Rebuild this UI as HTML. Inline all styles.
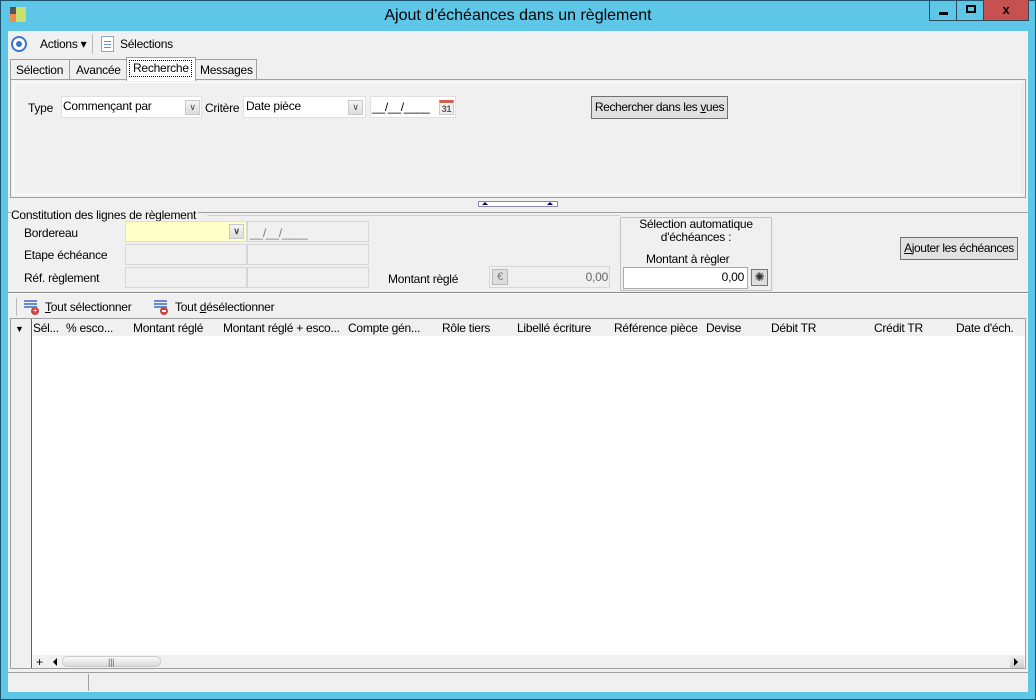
<!DOCTYPE html>
<html><head><meta charset="utf-8">
<style>
*{margin:0;padding:0;box-sizing:border-box}
body{width:1036px;height:700px;overflow:hidden;background:#5ec6e6;font-family:"Liberation Sans",sans-serif;font-size:12px;letter-spacing:-0.25px;color:#000;position:relative}
.a{position:absolute}
.t{position:absolute;white-space:nowrap;line-height:14px}
.fld{position:absolute;border:1px solid #d6d6d6;background:#f0f0f0}
.wh{background:#fff;border:1px solid #e0e0e0}
.btn{position:absolute;border:1px solid #707070;background:#e1e1e1;text-align:center;line-height:20px;font-size:12px;white-space:nowrap;letter-spacing:-0.4px}
.dd{position:absolute;width:15px;height:15px;background:linear-gradient(#f4f4f4,#dcdcdc);border:1px solid #c8c8c8;font-size:9px;text-align:center;line-height:13px;color:#444}
</style></head><body>
<div class="a" style="left:0;top:0;width:1036px;height:700px;border:1px solid #1c5570"></div>
<div class="a" style="left:10px;top:7px;width:6px;height:7px;background:#555"></div>
<div class="a" style="left:10px;top:14px;width:6px;height:8px;background:#f08a50"></div>
<div class="a" style="left:16px;top:7px;width:10px;height:15px;background:#c8e070"></div>
<div class="t" style="left:0;width:1036px;text-align:center;top:7px;font-size:16px;line-height:18px;letter-spacing:0">Ajout d'échéances dans un règlement</div>
<div class="a" style="left:929px;top:0;width:28px;height:21px;border:1px solid #2a4a5a;border-top:none"><div class="a" style="left:9px;top:12px;width:9px;height:3px;background:#000"></div></div>
<div class="a" style="left:956px;top:0;width:28px;height:21px;border:1px solid #2a4a5a;border-top:none"><div class="a" style="left:9px;top:5px;width:10px;height:8px;border:2px solid #000"></div></div>
<div class="a" style="left:983px;top:0;width:46px;height:21px;background:#c75050;border:1px solid #2a4a5a;border-top:none;text-align:center;font-weight:bold;font-size:13px;line-height:19px">x</div>
<div class="a" style="left:8px;top:31px;width:1020px;height:661px;background:#f0f0f0"></div>
<div class="a" style="left:11px;top:36px;width:16px;height:16px;border-radius:50%;border:2px solid #3a78c8;background:#fff"><div class="a" style="left:3px;top:3px;width:6px;height:6px;border-radius:50%;background:#3a78c8"></div></div>
<div class="t" style="left:40px;top:37px">Actions ▾</div>
<div class="a" style="left:92px;top:34px;width:1px;height:20px;background:#bbb"></div>
<div class="a" style="left:101px;top:36px;width:13px;height:16px;background:#fff;border:1px solid #8aa8c8"><div class="a" style="left:2px;top:4px;width:7px;height:1px;background:#6a90c0;box-shadow:0 3px 0 #6a90c0,0 6px 0 #6a90c0"></div></div>
<div class="t" style="left:120px;top:37px">Sélections</div>
<div class="a" style="left:10px;top:79px;width:1016px;height:119px;border:1px solid #a0a0a0"></div>
<div class="a" style="left:13px;top:82px;width:1010px;height:113px;background:#f0f0f0;border:1px solid #fff;border-right-color:#e4e4e4"></div>
<div class="a" style="left:10px;top:59px;width:60px;height:21px;border:1px solid #a0a0a0;background:#f0f0f0"></div><div class="t" style="left:16px;top:63px">Sélection</div>
<div class="a" style="left:69px;top:59px;width:58px;height:21px;border:1px solid #a0a0a0;background:#f0f0f0"></div><div class="t" style="left:76px;top:63px">Avancée</div>
<div class="a" style="left:126px;top:57px;width:70px;height:24px;border:1px solid #a0a0a0;border-bottom:none;background:#fff"></div>
<div class="a" style="left:129px;top:60px;width:63px;height:17px;border:1px dotted #000"></div><div class="t" style="left:133px;top:61px">Recherche</div>
<div class="a" style="left:195px;top:59px;width:62px;height:21px;border:1px solid #a0a0a0;background:#f0f0f0"></div><div class="t" style="left:200px;top:63px">Messages</div>
<div class="t" style="left:28px;top:101px">Type</div>
<div class="a wh" style="left:61px;top:96px;width:141px;height:22px"></div>
<div class="t" style="left:63px;top:99px">Commençant par</div>
<div class="dd" style="left:185px;top:100px">&#x2228;</div>
<div class="t" style="left:205px;top:101px">Critère</div>
<div class="a wh" style="left:243px;top:96px;width:123px;height:22px"></div>
<div class="t" style="left:246px;top:99px">Date pièce</div>
<div class="dd" style="left:348px;top:100px">&#x2228;</div>
<div class="a wh" style="left:370px;top:96px;width:86px;height:22px"></div>
<div class="t" style="left:372px;top:100px">__/__/____</div>
<div class="a" style="left:439px;top:100px;width:15px;height:15px;border:1px solid #ccc;background:#eee;font-size:9px;font-weight:bold;color:#555;text-align:center;line-height:12px;border-top:3px solid #d06050">31</div>
<div class="btn" style="left:591px;top:96px;width:137px;height:23px">Rechercher dans les <u>v</u>ues</div>
<div class="a" style="left:478px;top:201px;width:80px;height:6px;border:1px solid #8a8aa8;background:#fff"></div>
<div class="a" style="left:482px;top:202px;width:0;height:0;border:3px solid transparent;border-bottom-color:#00006a;border-top:none"></div>
<div class="a" style="left:547px;top:202px;width:0;height:0;border:3px solid transparent;border-bottom-color:#00006a;border-top:none"></div>
<div class="a" style="left:8px;top:212px;width:1020px;height:1px;background:#a0a0a0"></div>
<div class="t" style="left:11px;top:208px;background:#f0f0f0;padding-right:2px">Constitution des lignes de règlement</div>
<div class="a" style="left:207px;top:215px;width:414px;height:1px;background:#d0d0d0"></div>
<div class="t" style="left:24px;top:226px">Bordereau</div>
<div class="a" style="left:125px;top:221px;width:122px;height:21px;background:#ffffc8;border:1px solid #ddd"></div>
<div class="dd" style="left:229px;top:224px;font-weight:bold">&#x2228;</div>
<div class="fld" style="left:247px;top:221px;width:122px;height:21px"></div>
<div class="t" style="left:250px;top:226px;color:#777">__/__/____</div>
<div class="t" style="left:24px;top:248px">Etape échéance</div>
<div class="fld" style="left:125px;top:244px;width:122px;height:21px"></div>
<div class="fld" style="left:247px;top:244px;width:122px;height:21px"></div>
<div class="t" style="left:24px;top:271px">Réf. règlement</div>
<div class="fld" style="left:125px;top:267px;width:122px;height:21px"></div>
<div class="fld" style="left:247px;top:267px;width:122px;height:21px"></div>
<div class="t" style="left:388px;top:272px">Montant règlé</div>
<div class="fld" style="left:489px;top:266px;width:121px;height:22px"></div>
<div class="a" style="left:492px;top:269px;width:16px;height:16px;border:1px solid #bbb;background:#ddd;color:#777;text-align:center;font-size:11px;line-height:14px">€</div>
<div class="t" style="left:560px;top:270px;color:#666;width:48px;text-align:right">0,00</div>
<div class="a" style="left:620px;top:217px;width:152px;height:74px;border:1px solid #c0c0c0"></div>
<div class="t" style="left:620px;top:218px;width:152px;text-align:center;line-height:13px">Sélection automatique<br>d'échéances :</div>
<div class="t" style="left:646px;top:252px">Montant à règler</div>
<div class="a wh" style="left:623px;top:267px;width:125px;height:22px;border-color:#aaa"></div>
<div class="t" style="left:690px;top:270px;width:54px;text-align:right">0,00</div>
<div class="a" style="left:751px;top:269px;width:17px;height:17px;border:1px solid #777;background:#ddd;text-align:center;font-size:12px;line-height:15px;color:#333">✺</div>
<div class="btn" style="left:900px;top:237px;width:118px;height:23px"><u>A</u>jouter les échéances</div>
<div class="a" style="left:8px;top:292px;width:1020px;height:2px;background:#8a8a8a;border-bottom:1px solid #fff"></div>
<div class="a" style="left:16px;top:298px;width:1px;height:18px;background:#bbb"></div>
<div class="a" style="left:24px;top:300px;width:13px;height:2px;background:#6a8ad0;box-shadow:0 3px 0 #6a8ad0,0 6px 0 #6a8ad0"></div>
<div class="a" style="left:31px;top:307px;width:8px;height:8px;border-radius:50%;background:#d04040;color:#fff;font-size:8px;line-height:8px;text-align:center">+</div>
<div class="t" style="left:45px;top:300px"><u>T</u>out sélectionner</div>
<div class="a" style="left:154px;top:300px;width:13px;height:2px;background:#6a8ad0;box-shadow:0 3px 0 #6a8ad0,0 6px 0 #6a8ad0"></div>
<div class="a" style="left:160px;top:307px;width:8px;height:8px;border-radius:50%;background:#d04040"><div class="a" style="left:2px;top:3px;width:4px;height:2px;background:#fff"></div></div>
<div class="t" style="left:175px;top:300px">Tout <u>d</u>ésélectionner</div>
<div class="a" style="left:10px;top:318px;width:1016px;height:351px;border:1px solid #a0a0a0;background:#fff"></div>
<div class="a" style="left:11px;top:319px;width:21px;height:349px;background:#f0f0f0;border-right:1px solid #606060"></div>
<div class="a" style="left:33px;top:319px;width:992px;height:17px;background:#f0f0f0"></div>
<div class="t" style="left:15px;top:322px;font-size:9px">▼</div>
<div class="t" style="left:33px;top:321px">Sél...</div>
<div class="t" style="left:66px;top:321px">% esco...</div>
<div class="t" style="left:133px;top:321px">Montant réglé</div>
<div class="t" style="left:223px;top:321px">Montant réglé + esco...</div>
<div class="t" style="left:348px;top:321px">Compte gén...</div>
<div class="t" style="left:442px;top:321px">Rôle tiers</div>
<div class="t" style="left:517px;top:321px">Libellé écriture</div>
<div class="t" style="left:614px;top:321px">Référence pièce</div>
<div class="t" style="left:706px;top:321px">Devise</div>
<div class="t" style="left:771px;top:321px">Débit TR</div>
<div class="t" style="left:874px;top:321px">Crédit TR</div>
<div class="t" style="left:956px;top:321px">Date d'éch.</div>
<div class="a" style="left:33px;top:655px;width:992px;height:13px;background:#f0f0f0"></div>
<div class="t" style="left:36px;top:655px;font-size:12px">+</div>
<div class="a" style="left:53px;top:658px;width:0;height:0;border:4px solid transparent;border-right:4px solid #000;border-left:none"></div>
<div class="a" style="left:62px;top:656px;width:99px;height:11px;border-radius:5px;background:linear-gradient(#fafafa,#d8d8d8);border:1px solid #ccc"></div>
<div class="t" style="left:108px;top:655px;font-size:9px;color:#666">|||</div>
<div class="a" style="left:1010px;top:655px;width:14px;height:13px;background:linear-gradient(#f0f0f0,#ccc)"></div>
<div class="a" style="left:1014px;top:658px;width:0;height:0;border:4px solid transparent;border-left:4px solid #000;border-right:none"></div>
<div class="a" style="left:8px;top:672px;width:1020px;height:1px;background:#a0a0a0"></div>
<div class="a" style="left:88px;top:674px;width:1px;height:17px;background:#a0a0a0"></div>
</body></html>
